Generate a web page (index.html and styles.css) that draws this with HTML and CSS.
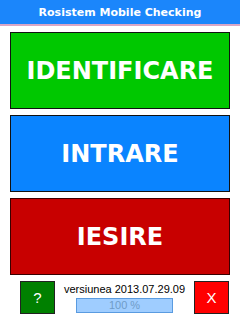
FILE: index.html
```html
<!DOCTYPE html>
<html>
<head>
<meta charset="utf-8">
<link rel="stylesheet" href="styles.css">
</head>
<body>
<div class="screen">
  <div class="header">Rosistem Mobile Checking</div>
  <div class="menu">
    <div class="big green">IDENTIFICARE</div>
    <div class="big blue">INTRARE</div>
    <div class="big red">IESIRE</div>
  </div>
  <div class="footer">
    <div class="sq help">?</div>
    <div class="mid">
      <div class="ver">versiunea 2013.07.29.09</div>
      <div class="bar">100 %</div>
    </div>
    <div class="sq close">X</div>
  </div>
</div>
</body>
</html>
```
FILE: styles.css
```css
html, body { margin: 0; padding: 0; background: #fff; }
.screen {
  width: 240px; height: 320px; overflow: hidden;
  font-family: "DejaVu Sans", Verdana, sans-serif;
  display: flex; flex-direction: column;
}
.header {
  height: 24px; background: #1b86fb; color: #fff;
  border-bottom: 2px solid #d9a6c6;
  font-weight: bold; font-size: 11px;
  display: flex; align-items: center; justify-content: center;
}
.menu {
  display: flex; flex-direction: column; gap: 6px;
  padding: 6px 10px 0 10px;
}
.big {
  height: 75px; border: 1px solid #111;
  display: flex; align-items: center; justify-content: center;
  color: #fff; font-weight: bold; font-size: 24px;
}
.green { background: #00c800; }
.blue { background: #0a84ff; }
.red { background: #c80000; border-color: #3a0000; }
.footer {
  display: flex; align-items: flex-start;
  padding: 6px 11px 0 20px;
}
.sq {
  width: 33px; height: 31px; border: 1px solid #222;
  color: #fff; font-size: 15px;
  font-family: "Liberation Sans", Arial, sans-serif;
  display: flex; align-items: center; justify-content: center;
}
.help { background: #008000; }
.close { background: #ff0000; }
.mid {
  flex: 1; display: flex; flex-direction: column; align-items: center;
  font-family: "Liberation Sans", Arial, sans-serif;
}
.ver { font-size: 11px; color: #000; margin-top: 2px; line-height: 13px; }
.bar {
  margin-top: 2px; width: 95px; height: 13px;
  background: #9fcdff; border: 1px solid #5a9be0;
  color: #6f9cc8; font-size: 11px; line-height: 13px; text-align: center;
}
```
